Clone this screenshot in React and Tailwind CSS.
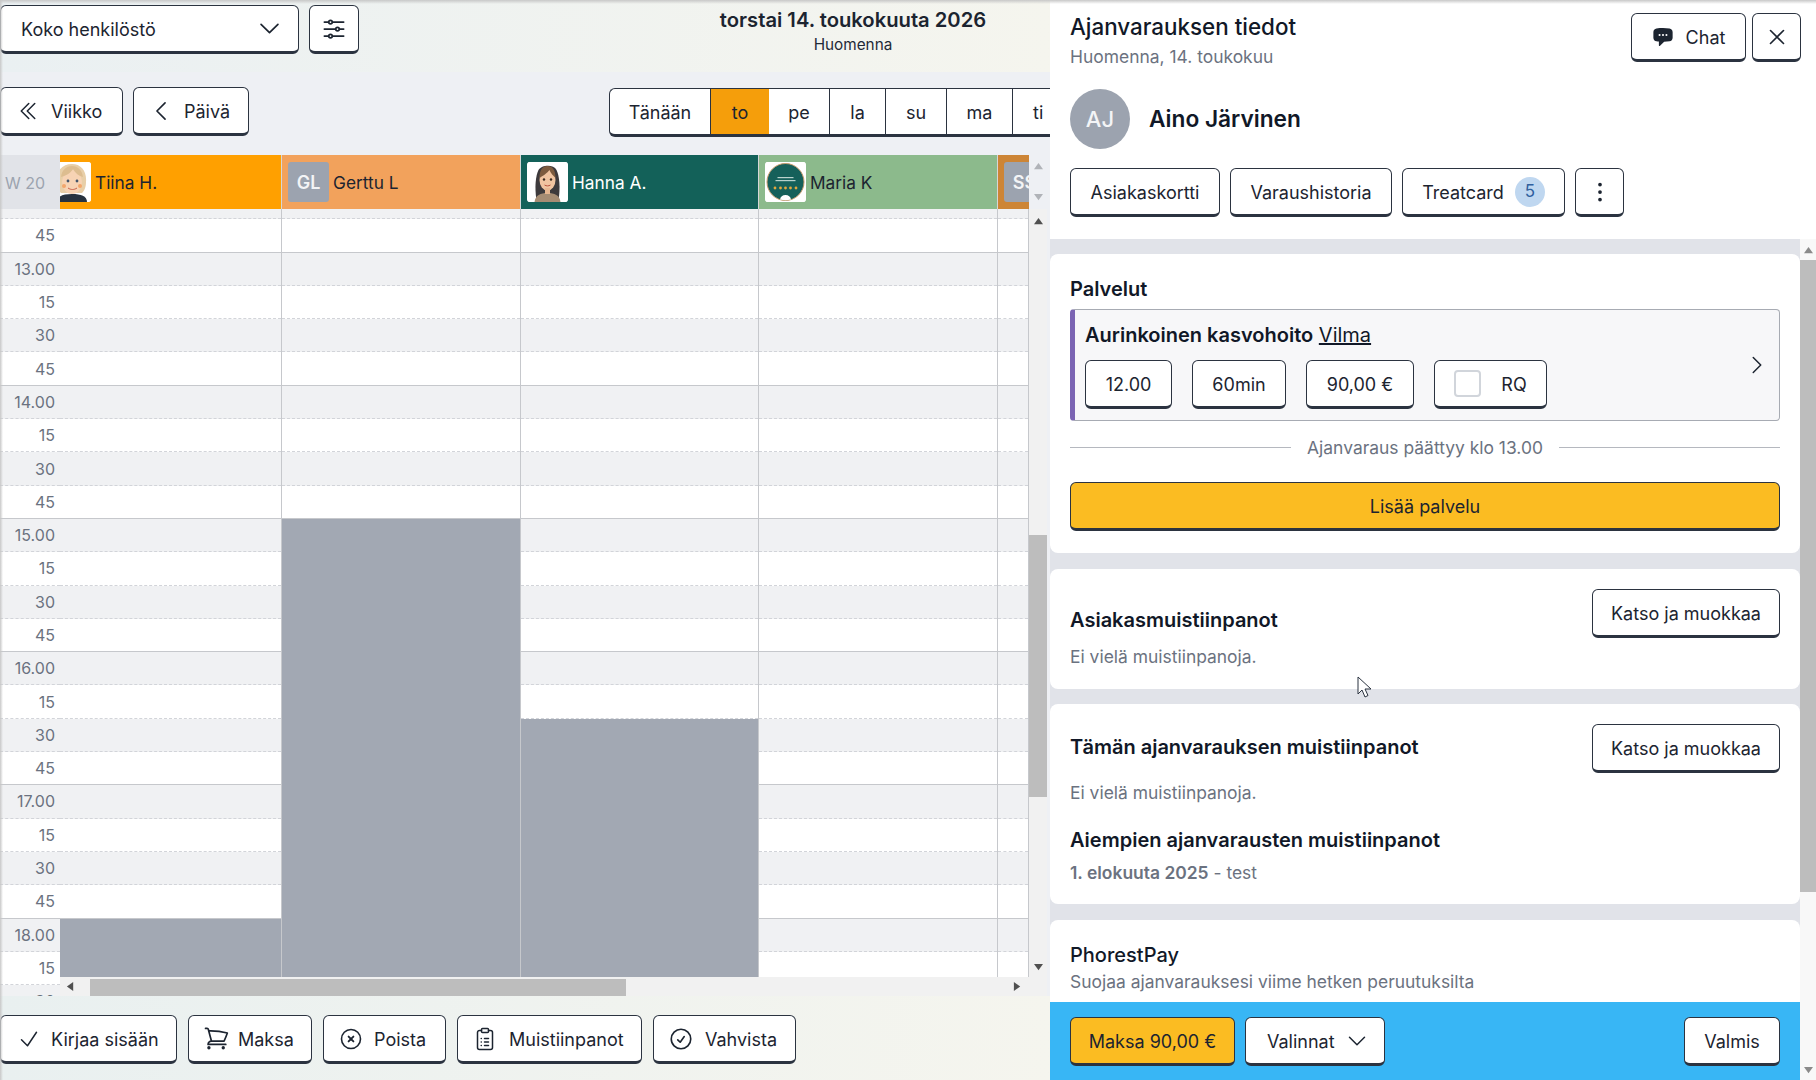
import React from 'react';
import {
  HiOutlineAdjustmentsHorizontal,
  HiOutlineCheck,
  HiOutlineCheckCircle,
  HiOutlineChevronDoubleLeft,
  HiOutlineChevronDown,
  HiOutlineChevronLeft,
  HiOutlineChevronRight,
  HiOutlineShoppingCart,
  HiOutlineXMark,
  HiChatBubbleLeftEllipsis,
  HiEllipsisVertical,
} from 'react-icons/hi2';

const ROW_LABELS = [
  '', '45',
  '13.00', '15', '30', '45',
  '14.00', '15', '30', '45',
  '15.00', '15', '30', '45',
  '16.00', '15', '30', '45',
  '17.00', '15', '30', '45',
  '18.00', '15', '30',
];

// blockedFrom = index in ROW_LABELS where the gray "not working" area starts
const COLUMNS = [
  { width: 'w-[222px]', blockedFrom: 22 },
  { width: 'w-[239px]', blockedFrom: 10 },
  { width: 'w-[238px]', blockedFrom: 16 },
  { width: 'w-[239px]', blockedFrom: 99 },
  { width: 'w-[31px]', blockedFrom: 99 },
];

const Btn = ({ className = '', children }) => (
  <button className={`flex h-[49px] shrink-0 items-center justify-center rounded-md border border-b-[3px] border-[#2b3340] bg-white pt-[2px] text-[18px] text-[#1c2430] ${className}`}>
    {children}
  </button>
);

const XCircleIcon = () => (
  <svg viewBox="0 0 26 26" fill="none" stroke="currentColor" className="-mt-[2px] h-[26px] w-[26px]">
    <circle cx="13" cy="13" r="9.5" strokeWidth="1.6" />
    <path d="M10.6 10.6l4.8 4.8M15.4 10.6l-4.8 4.8" strokeWidth="1.9" strokeLinecap="round" />
  </svg>
);

const ClipboardIcon = () => (
  <svg viewBox="0 0 24 24" fill="none" stroke="currentColor" strokeWidth="1.5" strokeLinecap="round" className="-mt-[2px] h-[24px] w-[24px]">
    <path d="M8.5 3.5H6.5a2 2 0 0 0-2 2v15a2 2 0 0 0 2 2h11a2 2 0 0 0 2-2v-15a2 2 0 0 0-2-2h-2" />
    <rect x="8.5" y="1.5" width="7" height="4" rx="1" />
    <path d="M11.5 11.5h4M11.5 15h4M11.5 18.5h4M8.2 11.5h.1M8.2 15h.1M8.2 18.5h.1" />
  </svg>
);

const TiinaAvatar = () => (
  <svg viewBox="0 0 37 40" className="h-full w-full">
    <rect width="37" height="40" fill="#fff" />
    <path d="M3 40c0-6 6-8 15-8s15 2 15 8z" fill="#27323f" />
    <path d="M2 20C2 8 9 2 18 2s15 7 14 18c0 6-2 9-4 11H7c-3-3-5-6-5-11z" fill="#e8cfa8" />
    <ellipse cx="18" cy="20" rx="10" ry="12" fill="#f7d3b4" />
    <path d="M7 15c4-1 9-3 12-8 2 4 6 7 10 8-1-7-5-11-11-11S8 8 7 15z" fill="#ddbd90" />
    <circle cx="14" cy="19" r="1.4" fill="#44556a" />
    <circle cx="23" cy="19" r="1.4" fill="#44556a" />
    <path d="M14 26c3 2 6 2 9 0" stroke="#c9614a" strokeWidth="1" fill="none" />
    <circle cx="10" cy="24" r="2" fill="#f2a66b" />
    <circle cx="26" cy="24" r="2" fill="#f2a66b" />
  </svg>
);

const HannaAvatar = () => (
  <svg viewBox="0 0 40 40" className="h-full w-full">
    <rect width="40" height="40" fill="#fff" />
    <path d="M9 38C7 26 8 14 11 8c3-5 15-6 18 0 3 6 4 18 2 30z" fill="#3d3a3c" />
    <path d="M7 40c1-7 6-9 13-9s12 2 13 9z" fill="#a58c73" />
    <ellipse cx="20" cy="18" rx="8" ry="10.5" fill="#f0c4a0" />
    <path d="M12 16c3-2 8-5 10-8 1 3 4 6 6 8 0-8-3-12-8-12s-8 4-8 12z" fill="#7c5b3e" />
    <rect x="17.5" y="26" width="5" height="6" fill="#e6b690" />
    <circle cx="16.5" cy="17.5" r="1.2" fill="#3b2b20" />
    <circle cx="23.5" cy="17.5" r="1.2" fill="#3b2b20" />
    <path d="M17 23c2 1.2 4 1.2 6 0" stroke="#b8543f" strokeWidth="1" fill="none" />
  </svg>
);

const MariaAvatar = () => (
  <svg viewBox="0 0 40 40" className="h-full w-full">
    <rect width="40" height="40" fill="#fff" />
    <circle cx="20" cy="20" r="18.5" fill="#15605a" stroke="#c79a6b" strokeWidth="1" />
    <rect x="12" y="15" width="16" height="1.2" fill="#b9d2cc" />
    <rect x="10" y="18" width="20" height="1.2" fill="#b9d2cc" />
    <g fill="#e3a73e">
      <circle cx="9.5" cy="26" r="1.4" />
      <circle cx="15" cy="26" r="1.4" />
      <circle cx="20" cy="26" r="1.4" />
      <circle cx="25" cy="26" r="1.4" />
      <circle cx="30.5" cy="26" r="1.4" />
    </g>
    <path d="M14.5 37.500c.5-3 2.500-4.500 5.500-4.500s5 1.500 5.500 4.500c-3.500 1-7.500 1-11 0z" fill="#fff" />
  </svg>
);

const StaffHeader = ({ width, bg, text, avatar, name }) => (
  <div className={`flex h-full shrink-0 items-center overflow-hidden border-r border-[#d6d6d6] ${width} ${bg}`}>
    {avatar}
    <span className={`ml-[4px] mt-[1px] whitespace-nowrap text-[17.3px] ${text}`}>{name}</span>
  </div>
);

const InitialsAvatar = ({ initials }) => (
  <div className="ml-[6px] flex h-[40px] w-[41px] shrink-0 items-center justify-center rounded-[3px] bg-[#9ca3af] text-[18px] font-semibold text-[#f3f4f6]">
    {initials}
  </div>
);

const PhotoAvatar = ({ children, className = 'ml-[6px] w-[41px]' }) => (
  <div className={`h-[40px] shrink-0 overflow-hidden rounded-[3px] bg-white ${className}`}>{children}</div>
);

const Triangle = ({ dir, className = '' }) => {
  const pts = {
    up: '0,8 5,1 10,8',
    down: '0,1 5,8 10,1',
    left: '8,0 1,5 8,10',
    right: '1,0 8,5 1,10',
  };
  return (
    <svg viewBox="0 0 10 10" className={`h-[9px] w-[9px] ${className}`}>
      <polygon points={pts[dir]} fill="currentColor" />
    </svg>
  );
};

const rowLine = (i) => (i % 4 === 1 ? 'border-b border-solid border-[#c6c8cc]' : 'border-b border-dashed border-[#d2d4d9]');
const rowBg = (i) => (i % 2 === 0 ? 'bg-[#f0f1f3]' : 'bg-white');

const TimeColumn = () => (
  <div className="w-[60px] shrink-0 overflow-hidden">
    <div className="mt-[-23px]">
      {ROW_LABELS.map((label, i) => (
        <div key={i} className={`flex h-[33.3px] items-center justify-end pr-[5px] text-[16px] text-[#6b7280] ${rowBg(i)} ${rowLine(i)}`}>
          {label}
        </div>
      ))}
    </div>
  </div>
);

const StaffColumn = ({ width, blockedFrom }) => (
  <div className={`shrink-0 border-r border-[#c6c8cc] ${width}`}>
    <div className="mt-[-23px]">
      {ROW_LABELS.map((_, i) =>
        i >= blockedFrom ? (
          <div key={i} className="h-[33.3px] bg-[#a2a8b3]" />
        ) : (
          <div key={i} className={`h-[33.3px] ${rowBg(i)} ${rowLine(i)}`} />
        ),
      )}
    </div>
  </div>
);

const LeftPanel = () => (
  <div className="flex h-full w-[1050px] shrink-0 flex-col overflow-hidden bg-[#eef0f4]">
    {/* Top bar */}
    <div className="flex h-[72px] shrink-0 items-start bg-gradient-to-r from-[#eaf0f2] to-[#f5f5ee] pt-[5px]">
      <Btn className="w-[299px] !justify-between pl-[20px] pr-[15px]">
        <span>Koko henkilöstö</span>
        <HiOutlineChevronDown className="-mt-[2px] h-[27px] w-[27px]" />
      </Btn>
      <Btn className="ml-[10px] w-[50px]">
        <HiOutlineAdjustmentsHorizontal className="-mt-[2px] h-[28px] w-[28px]" />
      </Btn>
      <div className="ml-auto flex w-[394px] flex-col items-center">
        <div className="text-[20.2px] font-semibold leading-[30px] text-[#1c2430]">torstai 14. toukokuuta 2026</div>
        <div className="text-[15.3px] leading-[20px] text-[#1f2937]">Huomenna</div>
      </div>
    </div>

    {/* Week / day navigation */}
    <div className="flex h-[83px] shrink-0 items-start justify-between pt-[15px]">
      <div className="flex gap-[10px]">
        <Btn className="w-[123px] !justify-start gap-[11px] pl-[15px]">
          <HiOutlineChevronDoubleLeft className="-mt-[2px] h-[24px] w-[24px]" />
          Viikko
        </Btn>
        <Btn className="w-[116px] !justify-start gap-[10px] pl-[14px]">
          <HiOutlineChevronLeft className="-mt-[2px] h-[26px] w-[26px]" />
          Päivä
        </Btn>
      </div>
      <div className="mt-[1px] flex h-[49px] w-[441px] overflow-hidden rounded-l-md border border-b-[3px] border-r-0 border-[#2b3340] bg-white pt-0 text-[18px] text-[#1c2430]">
        <div className="flex w-[101px] shrink-0 items-center justify-center border-r border-[#2b3340] pt-[2px]">Tänään</div>
        <div className="flex w-[58px] shrink-0 items-center justify-center bg-[#f59e0b] pt-[2px]">to</div>
        <div className="flex w-[61px] shrink-0 items-center justify-center border-r border-[#2b3340] pt-[2px]">pe</div>
        <div className="flex w-[56px] shrink-0 items-center justify-center border-r border-[#2b3340] pt-[2px]">la</div>
        <div className="flex w-[61px] shrink-0 items-center justify-center border-r border-[#2b3340] pt-[2px]">su</div>
        <div className="flex w-[66px] shrink-0 items-center justify-center border-r border-[#2b3340] pt-[2px]">ma</div>
        <div className="flex w-[37px] shrink-0 items-center pl-[20px] pt-[2px]">ti</div>
      </div>
    </div>

    {/* Staff header */}
    <div className="flex h-[54px] shrink-0">
      <div className="flex w-[60px] shrink-0 items-center bg-[#e1e3e8] pl-[5px] pt-[1px] text-[16px] text-[#9ca3af]">W 20</div>
      <StaffHeader
        width="w-[222px]"
        bg="bg-[#ffa000]"
        text="text-[#1c2430]"
        name="Tiina H."
        avatar={
          <PhotoAvatar className="w-[31px] rounded-l-none">
            <div className="ml-[-6px] h-full w-[37px]"><TiinaAvatar /></div>
          </PhotoAvatar>
        }
      />
      <StaffHeader width="w-[239px]" bg="bg-[#f2a25c]" text="text-[#1c2430]" name="Gerttu L" avatar={<InitialsAvatar initials="GL" />} />
      <StaffHeader
        width="w-[238px]"
        bg="bg-[#136159]"
        text="text-white"
        name="Hanna A."
        avatar={<PhotoAvatar><HannaAvatar /></PhotoAvatar>}
      />
      <StaffHeader
        width="w-[239px]"
        bg="bg-[#8cba8c]"
        text="text-[#1c2430]"
        name="Maria K"
        avatar={<PhotoAvatar><MariaAvatar /></PhotoAvatar>}
      />
      <div className="flex h-full w-[31px] shrink-0 items-center overflow-hidden bg-[#cd8536]">
        <InitialsAvatar initials="SS" />
      </div>
      <div className="flex w-[19px] shrink-0 flex-col items-center justify-between py-[7px] text-[#b0b3b8]">
        <Triangle dir="up" />
        <Triangle dir="down" />
      </div>
    </div>

    {/* Time grid */}
    <div className="flex h-[787px] shrink-0">
      <TimeColumn />
      <div className="flex w-[969px] shrink-0 flex-col">
        <div className="flex h-[768px] shrink-0 overflow-hidden bg-white">
          {COLUMNS.map((c, i) => (
            <StaffColumn key={i} width={c.width} blockedFrom={c.blockedFrom} />
          ))}
        </div>
        <div className="flex h-[19px] shrink-0 items-center bg-[#f1f1f1] text-[#505050]">
          <div className="flex w-[20px] shrink-0 justify-center"><Triangle dir="left" /></div>
          <div className="ml-[10px] mt-[2px] h-[17px] w-[536px] shrink-0 bg-[#bdbdbd]" />
          <div className="ml-auto flex w-[24px] justify-center"><Triangle dir="right" /></div>
        </div>
      </div>
      <div className="flex w-[18px] shrink-0 flex-col items-center bg-[#f1f1f1] pt-[8px] text-[#505050]">
        <Triangle dir="up" />
        <div className="mt-[309px] h-[262px] w-full bg-[#bdbdbd]" />
        <div className="mt-[166px]"><Triangle dir="down" /></div>
      </div>
    </div>

    {/* Bottom actions */}
    <div className="flex grow items-start gap-[11px] bg-gradient-to-r from-[#e9f0f0] to-[#f5f5ee] pt-[19px]">
      <Btn className="w-[177px] !justify-start gap-[10px] pl-[16px]">
        <HiOutlineCheck className="-mt-[2px] h-[24px] w-[24px]" />
        Kirjaa sisään
      </Btn>
      <Btn className="w-[124px] !justify-start gap-[8px] pl-[14px]">
        <HiOutlineShoppingCart className="-mt-[2px] h-[27px] w-[27px]" />
        Maksa
      </Btn>
      <Btn className="w-[123px] !justify-start gap-[10px] pl-[14px]">
        <XCircleIcon />
        Poista
      </Btn>
      <Btn className="w-[185px] !justify-start gap-[12px] pl-[15px]">
        <ClipboardIcon />
        Muistiinpanot
      </Btn>
      <Btn className="w-[143px] !justify-start gap-[11px] pl-[14px]">
        <HiOutlineCheckCircle className="-mt-[2px] h-[26px] w-[26px]" />
        Vahvista
      </Btn>
    </div>
  </div>
);

const Heading = ({ children, className = '' }) => (
  <div className={`text-[20px] font-semibold leading-[28px] text-[#111827] ${className}`}>{children}</div>
);

const Muted = ({ children, className = '' }) => (
  <div className={`text-[17.45px] leading-[24px] text-[#6b7280] ${className}`}>{children}</div>
);

const RightPanel = () => (
  <div className="flex h-full grow flex-col bg-white">
    {/* Drawer header */}
    <div className="h-[239px] shrink-0 pl-[20px] pr-[15px] pt-[11px]">
      <div className="flex justify-between">
        <div>
          <div className="text-[22.4px] font-medium leading-[32px] text-[#111827]">Ajanvarauksen tiedot</div>
          <Muted className="mt-[2px]">Huomenna, 14. toukokuu</Muted>
        </div>
        <div className="mt-[2px] flex gap-[6px]">
          <Btn className="w-[115px] gap-[12px]">
            <HiChatBubbleLeftEllipsis className="-mt-[2px] h-[22px] w-[22px]" />
            Chat
          </Btn>
          <Btn className="w-[49px]">
            <HiOutlineXMark className="-mt-[2px] h-[26px] w-[26px]" />
          </Btn>
        </div>
      </div>
      <div className="mt-[20px] flex items-center gap-[19px]">
        <div className="flex h-[60px] w-[60px] items-center justify-center rounded-full bg-[#9ca3af] text-[22px] font-medium text-[#f3f4f6]">AJ</div>
        <div className="text-[22.7px] font-semibold text-[#111827]">Aino Järvinen</div>
      </div>
      <div className="mt-[19px] flex gap-[10px]">
        <Btn className="w-[150px]">Asiakaskortti</Btn>
        <Btn className="w-[162px]">Varaushistoria</Btn>
        <Btn className="w-[163px] gap-[11px]">
          Treatcard
          <span className="-mt-[2px] flex h-[30px] w-[30px] items-center justify-center rounded-full bg-[#bfd7f0] text-[17px] text-[#2f5f9e]">5</span>
        </Btn>
        <Btn className="w-[49px]">
          <HiEllipsisVertical className="-mt-[2px] h-[30px] w-[30px]" />
        </Btn>
      </div>
    </div>

    {/* Scrolling body */}
    <div className="flex min-h-0 grow">
      <div className="flex w-[750px] shrink-0 flex-col">
        <div className="flex min-h-0 grow flex-col gap-[15.5px] overflow-hidden bg-[#e1e3e9] pt-[15px]">
          <section className="shrink-0 rounded-lg bg-white px-[20px] pb-[22px] pt-[21px]">
            <Heading>Palvelut</Heading>
            <div className="mt-[6px] flex h-[112px] items-start justify-between rounded-[4px] border border-l-[5px] border-[#a7abb3] border-l-[#7b64b3] bg-[#f7f7f9] pl-[10px] pr-[10px] pt-[11px]">
              <div>
                <div className="text-[20px] leading-[28px] text-[#111827]">
                  <span className="font-semibold">Aurinkoinen kasvohoito</span> <span className="underline">Vilma</span>
                </div>
                <div className="mt-[11px] flex gap-[20px]">
                  <Btn className="w-[87px]">12.00</Btn>
                  <Btn className="w-[94px]">60min</Btn>
                  <Btn className="w-[108px]">90,00 €</Btn>
                  <Btn className="w-[113px] gap-[20px]">
                    <span className="-mt-[2px] h-[27px] w-[27px] rounded-[4px] border-2 border-[#d1d5db] bg-white" />
                    RQ
                  </Btn>
                </div>
              </div>
              <HiOutlineChevronRight className="mt-[32px] h-[24px] w-[24px] text-[#1c2430]" />
            </div>
            <div className="mt-[14px] flex h-[24px] items-center gap-[16px]">
              <div className="h-px grow bg-[#b5b8bf]" />
              <Muted className="mt-[2px]">Ajanvaraus päättyy klo 13.00</Muted>
              <div className="h-px grow bg-[#b5b8bf]" />
            </div>
            <Btn className="mt-[23px] w-full !bg-[#fbbc22]">Lisää palvelu</Btn>
          </section>

          <section className="flex shrink-0 items-start justify-between rounded-lg bg-white px-[20px] pb-[20px] pt-[20px]">
            <div className="pt-[17px]">
              <Heading>Asiakasmuistiinpanot</Heading>
              <Muted className="mt-[11px]">Ei vielä muistiinpanoja.</Muted>
            </div>
            <Btn className="w-[188px]">Katso ja muokkaa</Btn>
          </section>

          <section className="shrink-0 rounded-lg bg-white px-[20px] pb-[19px] pt-[20px]">
            <div className="flex items-start justify-between">
              <div className="pt-[9px]">
                <Heading>Tämän ajanvarauksen muistiinpanot</Heading>
                <Muted className="mt-[20px]">Ei vielä muistiinpanoja.</Muted>
              </div>
              <Btn className="w-[188px]">Katso ja muokkaa</Btn>
            </div>
            <Heading className="mt-[21px]">Aiempien ajanvarausten muistiinpanot</Heading>
            <Muted className="mt-[7px]">
              <span className="font-semibold">1. elokuuta 2025</span> - test
            </Muted>
          </section>

          <section className="grow rounded-t-lg bg-white px-[20px] pt-[21px]">
            <div className="text-[20px] font-medium leading-[28px] text-[#111827]">PhorestPay</div>
            <Muted className="mt-px">Suojaa ajanvarauksesi viime hetken peruutuksilta</Muted>
          </section>
        </div>

        {/* Sticky footer */}
        <div className="flex h-[78px] shrink-0 items-start gap-[10px] bg-[#38b6f5] px-[20px] pt-[15px]">
          <Btn className="w-[165px] !bg-[#fbbc22]">Maksa 90,00 €</Btn>
          <Btn className="w-[140px] !justify-start gap-[10px] pl-[21px]">
            Valinnat
            <HiOutlineChevronDown className="-mt-[2px] h-[24px] w-[24px]" />
          </Btn>
          <Btn className="ml-auto w-[96px]">Valmis</Btn>
        </div>
      </div>

      {/* Drawer scrollbar */}
      <div className="flex w-[16px] shrink-0 flex-col items-center bg-[#f8f8f8] pt-[7px] text-[#8a8a8a]">
        <Triangle dir="up" />
        <div className="mt-[5px] h-[632px] w-full bg-[#bdbdbd]" />
        <div className="mt-auto pb-[5px]"><Triangle dir="down" /></div>
      </div>
    </div>
  </div>
);

export default function App() {
  return (
    <div className="relative flex h-screen w-full overflow-hidden bg-white [font-family:Inter,sans-serif]">
      <LeftPanel />
      <RightPanel />

      {/* top edge shadow */}
      <div className="pointer-events-none absolute inset-x-0 top-0 h-[4px] bg-gradient-to-b from-[#c8c8c8] to-transparent" />
      <div className="pointer-events-none absolute inset-y-0 left-0 w-[3px] bg-gradient-to-r from-[#c8c8c8] to-transparent" />

      {/* mouse cursor */}
      <svg viewBox="0 0 16 23" className="pointer-events-none absolute left-[1357px] top-[676px] h-[23px] w-[16px]">
        <path d="M1 1v17l4-4 3 7 3-1.5-3-6.5h6z" fill="#fff" stroke="#2b3340" strokeWidth="1" />
      </svg>
    </div>
  );
}
